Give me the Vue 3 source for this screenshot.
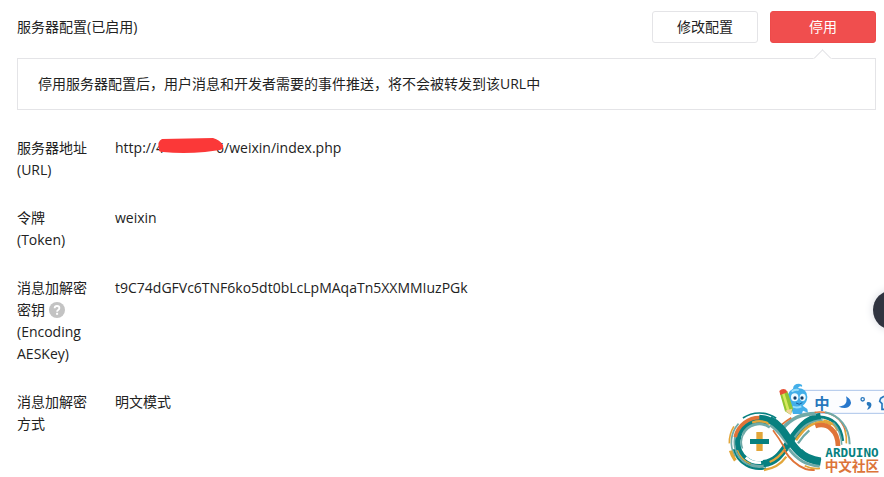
<script setup>
const notice = '停用服务器配置后，用户消息和开发者需要的事件推送，将不会被转发到该URL中'

const TEAL = '#078080'
const MIST = '#70aaa8'
const AMBER = '#e2a63a'
const RUST = '#e07438'

// Clockwise arc around the left ring, angles in degrees (0 = right, 90 = down).
function arc(r, from, to) {
  const at = (deg) => {
    const a = (deg * Math.PI) / 180
    return `${(106 + r * Math.cos(a)).toFixed(1)} ${(187 + r * Math.sin(a)).toFixed(1)}`
  }
  return `M${at(from)} A${r} ${r} 0 ${to - from > 180 ? 1 : 0} 1 ${at(to)}`
}

const ring = [
  { r: 65, from: 75, to: 295, color: TEAL, width: 17 },
  { r: 75, from: 80, to: 215, color: MIST, width: 5 },
  { r: 80, from: 75, to: 165, color: TEAL, width: 6 },
  { r: 74, from: 192, to: 275, color: RUST, width: 11 },
  { r: 75, from: 270, to: 305, color: TEAL, width: 15 },
  { r: 63, from: 250, to: 300, color: AMBER, width: 7 },
  { r: 54, from: 160, to: 205, color: MIST, width: 5 },
  { r: 55, from: 205, to: 305, color: MIST, width: 8 },
  { r: 61, from: 85, to: 132, color: '#fff', width: 8 },
  { r: 71, from: 60, to: 112, color: MIST, width: 7 },
  { r: 70, from: 112, to: 160, color: AMBER, width: 4 },
  { r: 84, from: 150, to: 222, color: MIST, width: 5 },
  { r: 90, from: 143, to: 164, color: AMBER, width: 10 },
  { r: 90, from: 178, to: 212, color: AMBER, width: 5 },
  { r: 88, from: 236, to: 305, color: TEAL, width: 5 }
]
</script>

<template>
  <main class="page">
    <header class="head">
      <h1 class="title">服务器配置(已启用)</h1>
      <div class="actions">
        <button type="button" class="btn">修改配置</button>
        <button type="button" class="btn btn-danger">停用</button>
      </div>
    </header>

    <p class="notice">{{ notice }}</p>

    <dl class="config">
      <div class="row">
        <dt>服务器地址 (URL)</dt>
        <dd>
          http://<span class="masked"><span>4</span><span>6</span>
            <svg class="scribble" viewBox="0 0 68 18" aria-hidden="true">
              <path d="M5 2 L56 1 Q63 3 66 8 Q67 12 63 13 L48 15 Q26 17 6 15 Q1 15 2 12 Q0 4 5 2Z" fill="#fb3838" />
            </svg>
          </span>/weixin/index.php
        </dd>
      </div>
      <div class="row">
        <dt>令牌 (Token)</dt>
        <dd>weixin</dd>
      </div>
      <div class="row">
        <dt>
          消息加解密密钥
          <svg class="help" viewBox="0 0 16 16" role="img" aria-label="帮助">
            <circle cx="8" cy="8" r="8" fill="#c3c3c3" />
            <path d="M5.6 6.3 Q5.7 4 8 4 Q10.4 4 10.4 6.1 Q10.4 7.2 9.2 8 Q8.1 8.7 8.1 9.8" fill="none" stroke="#fff" stroke-width="1.8" />
            <rect x="7.1" y="10.8" width="2" height="2" fill="#fff" />
          </svg>
          (Encoding AESKey)
        </dt>
        <dd>t9C74dGFVc6TNF6ko5dt0bLcLpMAqaTn5XXMMIuzPGk</dd>
      </div>
      <div class="row">
        <dt>消息加解密方式</dt>
        <dd>明文模式</dd>
      </div>
    </dl>

    <button type="button" class="side-tab" aria-label="展开"></button>

    <svg class="badge" viewBox="0 0 480 291" role="img" aria-label="ARDUINO 中文社区">
      <!-- input method bar -->
      <path d="M215 31 H480 V100 H215Z" fill="#fcfdff" />
      <path d="M215 31 H480 M215 100 H480" stroke="#abc5ea" stroke-width="3" />
      <text class="ime" x="271" y="86">中</text>
      <circle cx="416" cy="58" r="5" fill="none" stroke="#2777bd" stroke-width="4" />
      <path d="M366 49 Q386 60 379 75 Q370 90 344 80 Q363 78 367 66 Q369 57 366 49Z" fill="#2777cc" />
      <path d="M431 66 Q444 65 442 77 Q440 86 429 89 Q434 82 434 78 Q428 77 428 71 Q428 67 431 66Z" fill="#2777bd" />
      <path d="M480 49 L470 55 L467 64 L474 71 V88 H480" fill="#e9f5ff" stroke="#2777bd" stroke-width="5" />

      <!-- mascot -->
      <path d="M207 26 Q208 11 225 11 Q237 13 234 20 Q226 16 222 24 Q249 25 250 51 Q249 69 236 77 L250 87 L252 98 L237 92 L233 102 H207 L204 92 L192 97 L186 90 L202 75 Q188 63 192 43 Q196 31 207 26Z" fill="#43afe9" />
      <path d="M203 35 Q211 27 224 30 M206 80 Q219 85 232 79" fill="none" stroke="#98def9" stroke-width="6" />
      <ellipse cx="212" cy="52" rx="11" ry="12" fill="#eefaff" />
      <ellipse cx="236" cy="52" rx="9" ry="11" fill="#eefaff" />
      <circle cx="213" cy="54" r="5" fill="#153d67" />
      <circle cx="234" cy="54" r="5" fill="#153d67" />
      <path d="M216 69 Q226 77 235 68" fill="none" stroke="#1761a0" stroke-width="3" />
      <path d="M168 41 L190 33 L207 86 L200 104 L183 94Z" fill="#91c52f" />
      <path d="M174 41 L181 38 L197 91 L190 95Z" fill="#d7e85d" />
      <path d="M166 33 Q174 24 186 29 L190 37 L169 45Z" fill="#e75136" />
      <path d="M184 92 L204 86 L201 105Z" fill="#f3d39c" />

      <!-- infinity mark -->
      <g fill="none">
        <path v-for="(a, i) in ring" :key="i" :d="arc(a.r, a.from, a.to)" :stroke="a.color" :stroke-width="a.width" />

        <!-- lower left to upper right -->
        <path d="M120 270 Q163 264 187 230" :stroke="AMBER" stroke-width="7" />
        <path d="M118 251 C160 246 174 217 199 182 C225 146 247 116 290 109" :stroke="TEAL" stroke-width="22" />
        <path d="M137 246 Q163 236 184 206" :stroke="AMBER" stroke-width="7" />
        <path d="M178 143 C202 117 228 101 276 101" :stroke="MIST" stroke-width="11" />
        <path d="M172 135 Q188 121 202 113" :stroke="RUST" stroke-width="5" />
        <path d="M212 172 C236 138 258 122 296 120" :stroke="MIST" stroke-width="6" />
        <path d="M216 181 C240 146 259 130 290 126 Q310 125 322 136" :stroke="AMBER" stroke-width="8" />
        <path d="M222 190 Q238 166 256 151" :stroke="MIST" stroke-width="7" />

        <!-- upper left to lower right -->
        <path d="M138 135 C160 148 174 171 192 192" :stroke="MIST" stroke-width="9" />
        <path d="M147 151 Q166 176 182 204" :stroke="RUST" stroke-width="5" />
        <path d="M137 119 C176 137 188 172 206 194 C230 225 250 240 290 247" :stroke="TEAL" stroke-width="22" />
        <path d="M194 206 C222 243 246 254 287 259" :stroke="MIST" stroke-width="8" />
        <path d="M232 209 Q252 230 291 235" :stroke="TEAL" stroke-width="5" />
        <path d="M180 209 Q206 252 245 267 Q257 271 272 270" :stroke="RUST" stroke-width="6" />
        <path d="M242 257 Q264 268 288 265" :stroke="AMBER" stroke-width="5" />

        <!-- right loop -->
        <path d="M272 97 C322 90 354 118 364 153" :stroke="RUST" stroke-width="4" />
        <path d="M303 97 C346 106 376 140 377 193" :stroke="MIST" stroke-width="6" />
        <path d="M280 111 C326 108 352 139 356 183" :stroke="TEAL" stroke-width="9" />
        <path d="M298 121 Q330 125 341 153" :stroke="AMBER" stroke-width="6" />
        <path d="M274 138 C310 126 342 153 342 198" :stroke="RUST" stroke-width="14" />
        <path d="M328 128 Q352 155 353 194" :stroke="MIST" stroke-width="5" />
        <path d="M363 151 Q369 173 367 190" :stroke="AMBER" stroke-width="5" />
      </g>
      <path d="M97 156 H116 V213 H97Z" :fill="AMBER" />
      <path d="M78 177 H135 V192 H78Z" :fill="TEAL" />
      <text class="brand" x="304" y="232">ARDUINO</text>
      <text class="brand-cn" x="302" y="273">中文社区</text>
    </svg>
  </main>
</template>

<style>
body {
  margin: 0;
  background: #fff;
}
</style>

<style scoped>
.page {
  position: relative;
  padding: 11px 8px 42px 17px;
  overflow: hidden;
  color: #222;
  font: 14px/22px "Open Sans", "Noto Sans CJK SC", sans-serif;
}

.head {
  display: flex;
  align-items: center;
  justify-content: space-between;
}

.title {
  margin: 0;
  font-size: 14px;
  font-weight: 400;
}

.actions {
  display: flex;
  gap: 12px;
}

.btn {
  box-sizing: border-box;
  width: 106px;
  height: 32px;
  padding: 0;
  border: 1px solid #e4e4e7;
  border-radius: 3px;
  background: #fff;
  color: #222;
  font: inherit;
}

.btn-danger {
  border-color: #ed4a4a;
  background: #f04e4e;
  color: #fff;
}

.notice {
  position: relative;
  margin: 15px 0 27px;
  padding: 14px 20px;
  border: 1px solid #e4e4e7;
}

.notice::before {
  content: "";
  position: absolute;
  top: -7px;
  right: 46px;
  width: 11px;
  height: 11px;
  border: 1px solid #e4e4e7;
  border-right-color: transparent;
  border-bottom-color: transparent;
  background: #fff;
  transform: rotate(45deg);
}

.config {
  display: grid;
  gap: 26px;
  margin: 0;
}

.row {
  display: grid;
  grid-template-columns: 74px 1fr;
  column-gap: 24px;
}

dd {
  margin: 0;
}

.masked {
  position: relative;
  display: inline-flex;
  justify-content: space-between;
  width: 68px;
}

.scribble {
  position: absolute;
  top: 0;
  left: 1px;
  width: 68px;
  height: 18px;
}

.help {
  width: 16px;
  height: 16px;
  vertical-align: -3px;
}

.side-tab {
  position: absolute;
  top: 290px;
  right: -29px;
  width: 40px;
  height: 40px;
  padding: 0;
  border: 0;
  border-radius: 50%;
  background: #303440;
  box-shadow: 0 0 8px #d5d8df;
}

.badge {
  position: absolute;
  right: 0;
  top: 380px;
  width: 160px;
  height: 97px;
}

.ime {
  fill: #2777bd;
  font: bold 46px "Noto Sans CJK SC", sans-serif;
}

.brand {
  fill: #078080;
  font: bold 38px "DejaVu Sans Mono", monospace;
}

.brand-cn {
  fill: #dc7439;
  font: bold 41px "Noto Sans CJK SC", sans-serif;
}
</style>
